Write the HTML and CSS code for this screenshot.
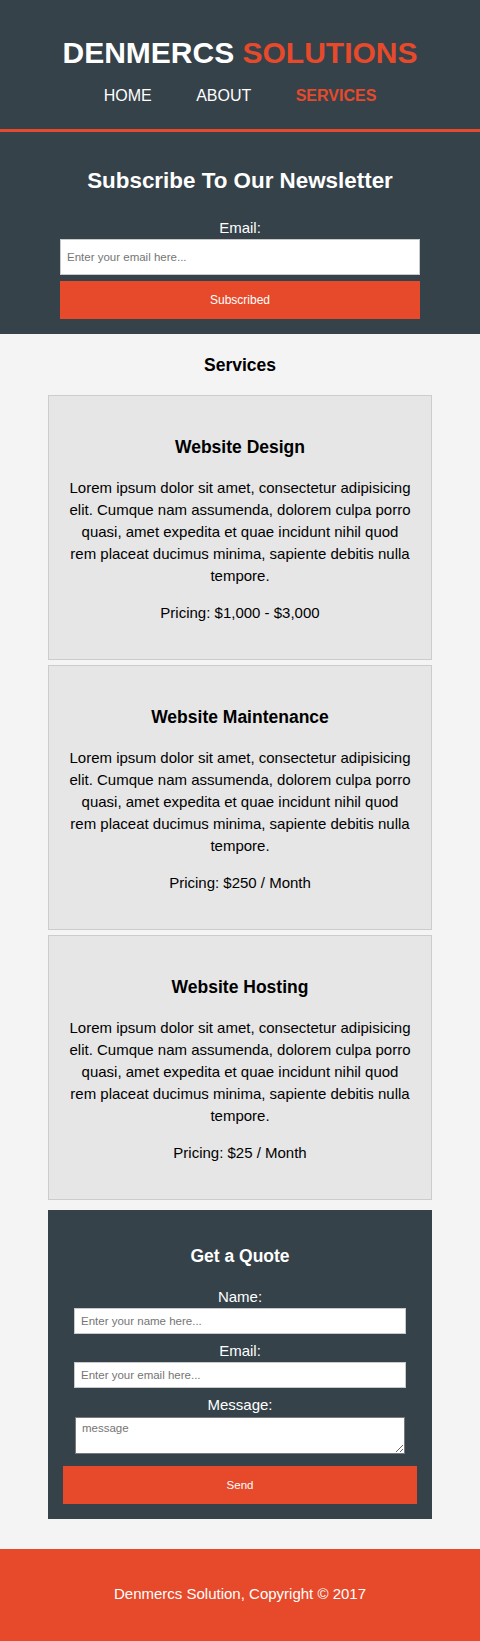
FILE: index.html
```html
<!DOCTYPE html>
<html lang="en">
<head>
<meta charset="utf-8">
<title>Denmercs Solutions | Services</title>
<link rel="stylesheet" href="styles.css">
</head>
<body>
<header class="site-header">
  <h1 class="brand"><span class="brand-main">DENMERCS</span> <span class="brand-accent">SOLUTIONS</span></h1>
  <nav class="main-nav">
    <ul class="nav-list">
      <li class="nav-item"><a class="nav-link" href="#">Home</a></li>
      <li class="nav-item"><a class="nav-link" href="#">About</a></li>
      <li class="nav-item"><a class="nav-link nav-current" href="#">Services</a></li>
    </ul>
  </nav>
</header>

<section class="newsletter">
  <h2 class="newsletter-title">Subscribe To Our Newsletter</h2>
  <form class="newsletter-form">
    <label class="field-label">Email:</label>
    <input class="text-input text-input-lg" type="email" placeholder="Enter your email here...">
    <button class="btn btn-lg" type="button">Subscribed</button>
  </form>
</section>

<main class="services">
  <div class="container">
    <h3 class="section-title">Services</h3>

    <div class="card">
      <h3 class="card-title">Website Design</h3>
      <p class="card-text">Lorem ipsum dolor sit amet, consectetur adipisicing elit. Cumque nam assumenda, dolorem culpa porro quasi, amet expedita et quae incidunt nihil quod rem placeat ducimus minima, sapiente debitis nulla tempore.</p>
      <p class="card-text">Pricing: $1,000 - $3,000</p>
    </div>

    <div class="card">
      <h3 class="card-title">Website Maintenance</h3>
      <p class="card-text">Lorem ipsum dolor sit amet, consectetur adipisicing elit. Cumque nam assumenda, dolorem culpa porro quasi, amet expedita et quae incidunt nihil quod rem placeat ducimus minima, sapiente debitis nulla tempore.</p>
      <p class="card-text">Pricing: $250 / Month</p>
    </div>

    <div class="card">
      <h3 class="card-title">Website Hosting</h3>
      <p class="card-text">Lorem ipsum dolor sit amet, consectetur adipisicing elit. Cumque nam assumenda, dolorem culpa porro quasi, amet expedita et quae incidunt nihil quod rem placeat ducimus minima, sapiente debitis nulla tempore.</p>
      <p class="card-text">Pricing: $25 / Month</p>
    </div>

    <div class="quote">
      <h3 class="quote-title">Get a Quote</h3>
      <form class="quote-form">
        <label class="field-label">Name:</label>
        <input class="text-input text-input-sm" type="text" placeholder="Enter your name here...">
        <label class="field-label">Email:</label>
        <input class="text-input text-input-sm" type="email" placeholder="Enter your email here...">
        <label class="field-label">Message:</label>
        <textarea class="text-area" placeholder="message"></textarea>
        <button class="btn btn-send" type="button">Send</button>
      </form>
    </div>
  </div>
</main>

<footer class="site-footer">
  <p class="footer-text">Denmercs Solution, Copyright &copy; 2017</p>
</footer>
</body>
</html>
```

FILE: styles.css
```css
* {
  box-sizing: border-box;
}

body {
  margin: 0;
  background: #f4f4f4;
  color: #000;
  font-family: "Liberation Sans", Arial, Helvetica, sans-serif;
  font-size: 15px;
  line-height: 22px;
}

/* Header */
.site-header {
  background: #35424a;
  padding: 35px 0 22px;
  border-bottom: 3px solid #e64a2a;
  text-align: center;
}

.brand {
  margin: 0;
  font-size: 30px;
  line-height: 36px;
  font-weight: bold;
}

.brand-main {
  color: #fff;
}

.brand-accent {
  color: #e64a2a;
}

.main-nav {
  margin-top: 14px;
}

.nav-list {
  list-style: none;
  margin: 0;
  padding: 0;
  display: flex;
  justify-content: center;
  gap: 4.45px;
}

.nav-item {
  padding: 0 20px;
}

.nav-link {
  color: #fff;
  text-decoration: none;
  text-transform: uppercase;
  font-size: 16px;
  line-height: 22px;
}

.nav-current {
  color: #e64a2a;
  font-weight: bold;
}

/* Newsletter */
.newsletter {
  background: #35424a;
  color: #fff;
  padding: 35px 60px 15px;
  text-align: center;
}

.newsletter-title {
  margin: 0 0 23px;
  font-size: 22.4px;
  line-height: 27px;
  font-weight: bold;
}

.newsletter-form {
  display: flex;
  flex-direction: column;
  align-items: stretch;
}

.field-label {
  display: block;
  font-size: 15px;
  line-height: 22px;
  text-align: center;
}

.text-input {
  display: block;
  background: #fff;
  border: 1px solid #c9c9c9;
  color: #333;
  font-family: "Liberation Sans", Arial, Helvetica, sans-serif;
  font-size: 11.5px;
  padding: 0 6px;
  margin: 0;
}

.text-input::placeholder,
.text-area::placeholder {
  color: #757575;
}

.text-input-lg {
  height: 36px;
  width: 100%;
}

.btn {
  display: block;
  width: 100%;
  border: 0;
  background: #e64a2a;
  color: #fff;
  font-family: "Liberation Sans", Arial, Helvetica, sans-serif;
  font-size: 12px;
  cursor: pointer;
}

.btn-lg {
  height: 38px;
  margin-top: 6px;
}

/* Services */
.services {
  padding: 0 0 30px;
}

.container {
  width: 80%;
  margin: 0 auto;
}

.section-title {
  margin: 0;
  padding: 18px 0 17px;
  font-size: 17.5px;
  line-height: 26px;
  font-weight: bold;
  text-align: center;
}

.card {
  background: #e6e6e6;
  border: 1px solid #cccccc;
  padding: 20px;
  margin-bottom: 5px;
  text-align: center;
}

.card-title {
  margin: 17.5px 0;
  font-size: 17.5px;
  line-height: 26px;
  font-weight: bold;
}

.card-text {
  margin: 15px 0;
  font-size: 15px;
  line-height: 22px;
}

/* Quote */
.quote {
  background: #35424a;
  color: #fff;
  padding: 15px;
  margin-top: 10px;
  text-align: center;
}

.quote-title {
  margin: 17.5px 0 17.5px;
  font-size: 17.5px;
  line-height: 26px;
  font-weight: bold;
}

.quote-form {
  display: flex;
  flex-direction: column;
  align-items: center;
}

.quote-form .field-label {
  line-height: 22px;
}

.text-input-sm {
  width: 332px;
  height: 26px;
  margin-bottom: 6px;
}

.text-area {
  display: block;
  width: 330px;
  height: 37px;
  margin: 1px 0 0;
  padding: 3px 6px;
  border: 1px solid #7a7a7a;
  background: #fff;
  font-family: "Liberation Sans", Arial, Helvetica, sans-serif;
  font-size: 11.5px;
  line-height: 14px;
  resize: both;
}

.btn-send {
  height: 38px;
  margin-top: 12px;
  font-size: 11.5px;
}

/* Footer */
.site-footer {
  background: #e64a2a;
  color: #fff;
  padding: 19px 0 21px;
  text-align: center;
}

.footer-text {
  margin: 15px 0;
  font-size: 15px;
  line-height: 22px;
}
```
